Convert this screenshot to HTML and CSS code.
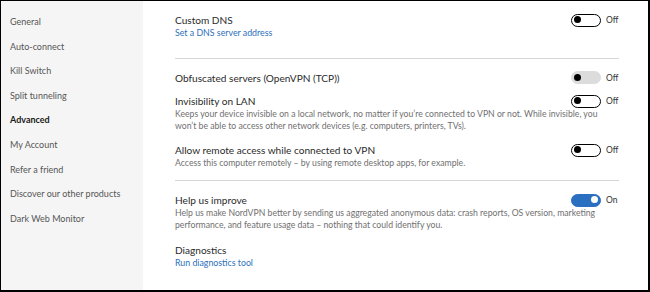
FILE: index.html
```html
<!DOCTYPE html>
<html>
<head>
<meta charset="utf-8">
<link rel="stylesheet" href="styles.css">
</head>
<body>
<div class="frame">
  <nav class="sidebar">
    <div class="nav-item">General</div>
    <div class="nav-item">Auto-connect</div>
    <div class="nav-item">Kill Switch</div>
    <div class="nav-item">Split tunneling</div>
    <div class="nav-item active">Advanced</div>
    <div class="nav-item">My Account</div>
    <div class="nav-item">Refer a friend</div>
    <div class="nav-item">Discover our other products</div>
    <div class="nav-item">Dark Web Monitor</div>
  </nav>
  <main class="content">
    <section class="group first">
      <div class="setting">
        <div class="head">
          <div class="title">Custom DNS</div>
          <div class="switch-wrap"><span class="switch off"><span class="knob"></span></span><span class="state">Off</span></div>
        </div>
        <div class="link">Set a DNS server address</div>
      </div>
    </section>
    <section class="group">
      <div class="setting">
        <div class="head">
          <div class="title">Obfuscated servers (OpenVPN (TCP))</div>
          <div class="switch-wrap"><span class="switch disabled"><span class="knob"></span></span><span class="state">Off</span></div>
        </div>
      </div>
      <div class="setting">
        <div class="head">
          <div class="title">Invisibility on LAN</div>
          <div class="switch-wrap"><span class="switch off"><span class="knob"></span></span><span class="state">Off</span></div>
        </div>
        <div class="desc">Keeps your device invisible on a local network, no matter if you’re connected to VPN or not. While invisible, you won’t be able to access other network devices (e.g. computers, printers, TVs).</div>
      </div>
      <div class="setting remote">
        <div class="head">
          <div class="title">Allow remote access while connected to VPN</div>
          <div class="switch-wrap"><span class="switch off"><span class="knob"></span></span><span class="state">Off</span></div>
        </div>
        <div class="desc">Access this computer remotely – by using remote desktop apps, for example.</div>
      </div>
    </section>
    <section class="group last">
      <div class="setting">
        <div class="head">
          <div class="title">Help us improve</div>
          <div class="switch-wrap"><span class="switch on"><span class="knob"></span></span><span class="state">On</span></div>
        </div>
        <div class="desc">Help us make NordVPN better by sending us aggregated anonymous data: crash reports, OS version, marketing performance, and feature usage data – nothing that could identify you.</div>
      </div>
      <div class="setting diag">
        <div class="title">Diagnostics</div>
        <div class="link">Run diagnostics tool</div>
      </div>
    </section>
  </main>
</div>
</body>
</html>
```
FILE: styles.css
```css
* { box-sizing: border-box; }
html, body { margin: 0; padding: 0; background: #000; }
body { width: 650px; height: 292px; font-family: "Lato", "Open Sans", sans-serif; }
.frame {
  display: flex;
  width: 650px;
  height: 292px;
  border-top: 1px solid #000;
  border-left: 1px solid #000;
  border-right: 2px solid #000;
  border-bottom: 2px solid #000;
  background: #fff;
}
.sidebar {
  width: 142px;
  background: #f5f5f5;
  padding-top: 14px;
  display: flex;
  flex-direction: column;
}
.nav-item {
  height: 24.6px;
  line-height: 14px;
  padding-left: 9px;
  font-size: 9px;
  color: #555;
}
.nav-item.active { font-weight: 700; color: #1a1a1a; }
.content {
  flex: 1;
  padding: 12px 29px 0 32px;
  display: flex;
  flex-direction: column;
}
.group {
  display: flex;
  flex-direction: column;
  gap: 9.5px;
  padding: 12px 0 11px;
  border-bottom: 1px solid #d6d6d6;
}
.group.first { padding-top: 0; padding-bottom: 18px; }
.group.last { border-bottom: none; padding-top: 12px; gap: 12px; }
.setting.remote { margin-top: 1.5px; }
.head { display: flex; align-items: center; justify-content: space-between; }
.title { font-size: 10.1px; line-height: 14px; color: #2a2a2a; }
.link { font-size: 8.8px; line-height: 12.5px; color: #2c6fba; }
.desc { font-size: 8.68px; line-height: 12px; color: #707070; }
.switch-wrap { display: flex; align-items: center; gap: 5px; }
.switch {
  position: relative;
  display: inline-block;
  width: 30px;
  height: 13px;
  border-radius: 7px;
  border: 1.5px solid #000;
  background: #fff;
}
.knob {
  position: absolute;
  top: 1.5px;
  left: 2px;
  width: 7px;
  height: 7px;
  border-radius: 50%;
  background: #000;
}
.switch.disabled { border-color: #dcdcdc; background: #dcdcdc; }
.switch.on { border-color: #2a6fc0; background: #2a6fc0; }
.switch.on .knob { left: auto; right: 2px; background: #fff; }
.state { font-size: 8.5px; color: #333; width: 13px; }
```
